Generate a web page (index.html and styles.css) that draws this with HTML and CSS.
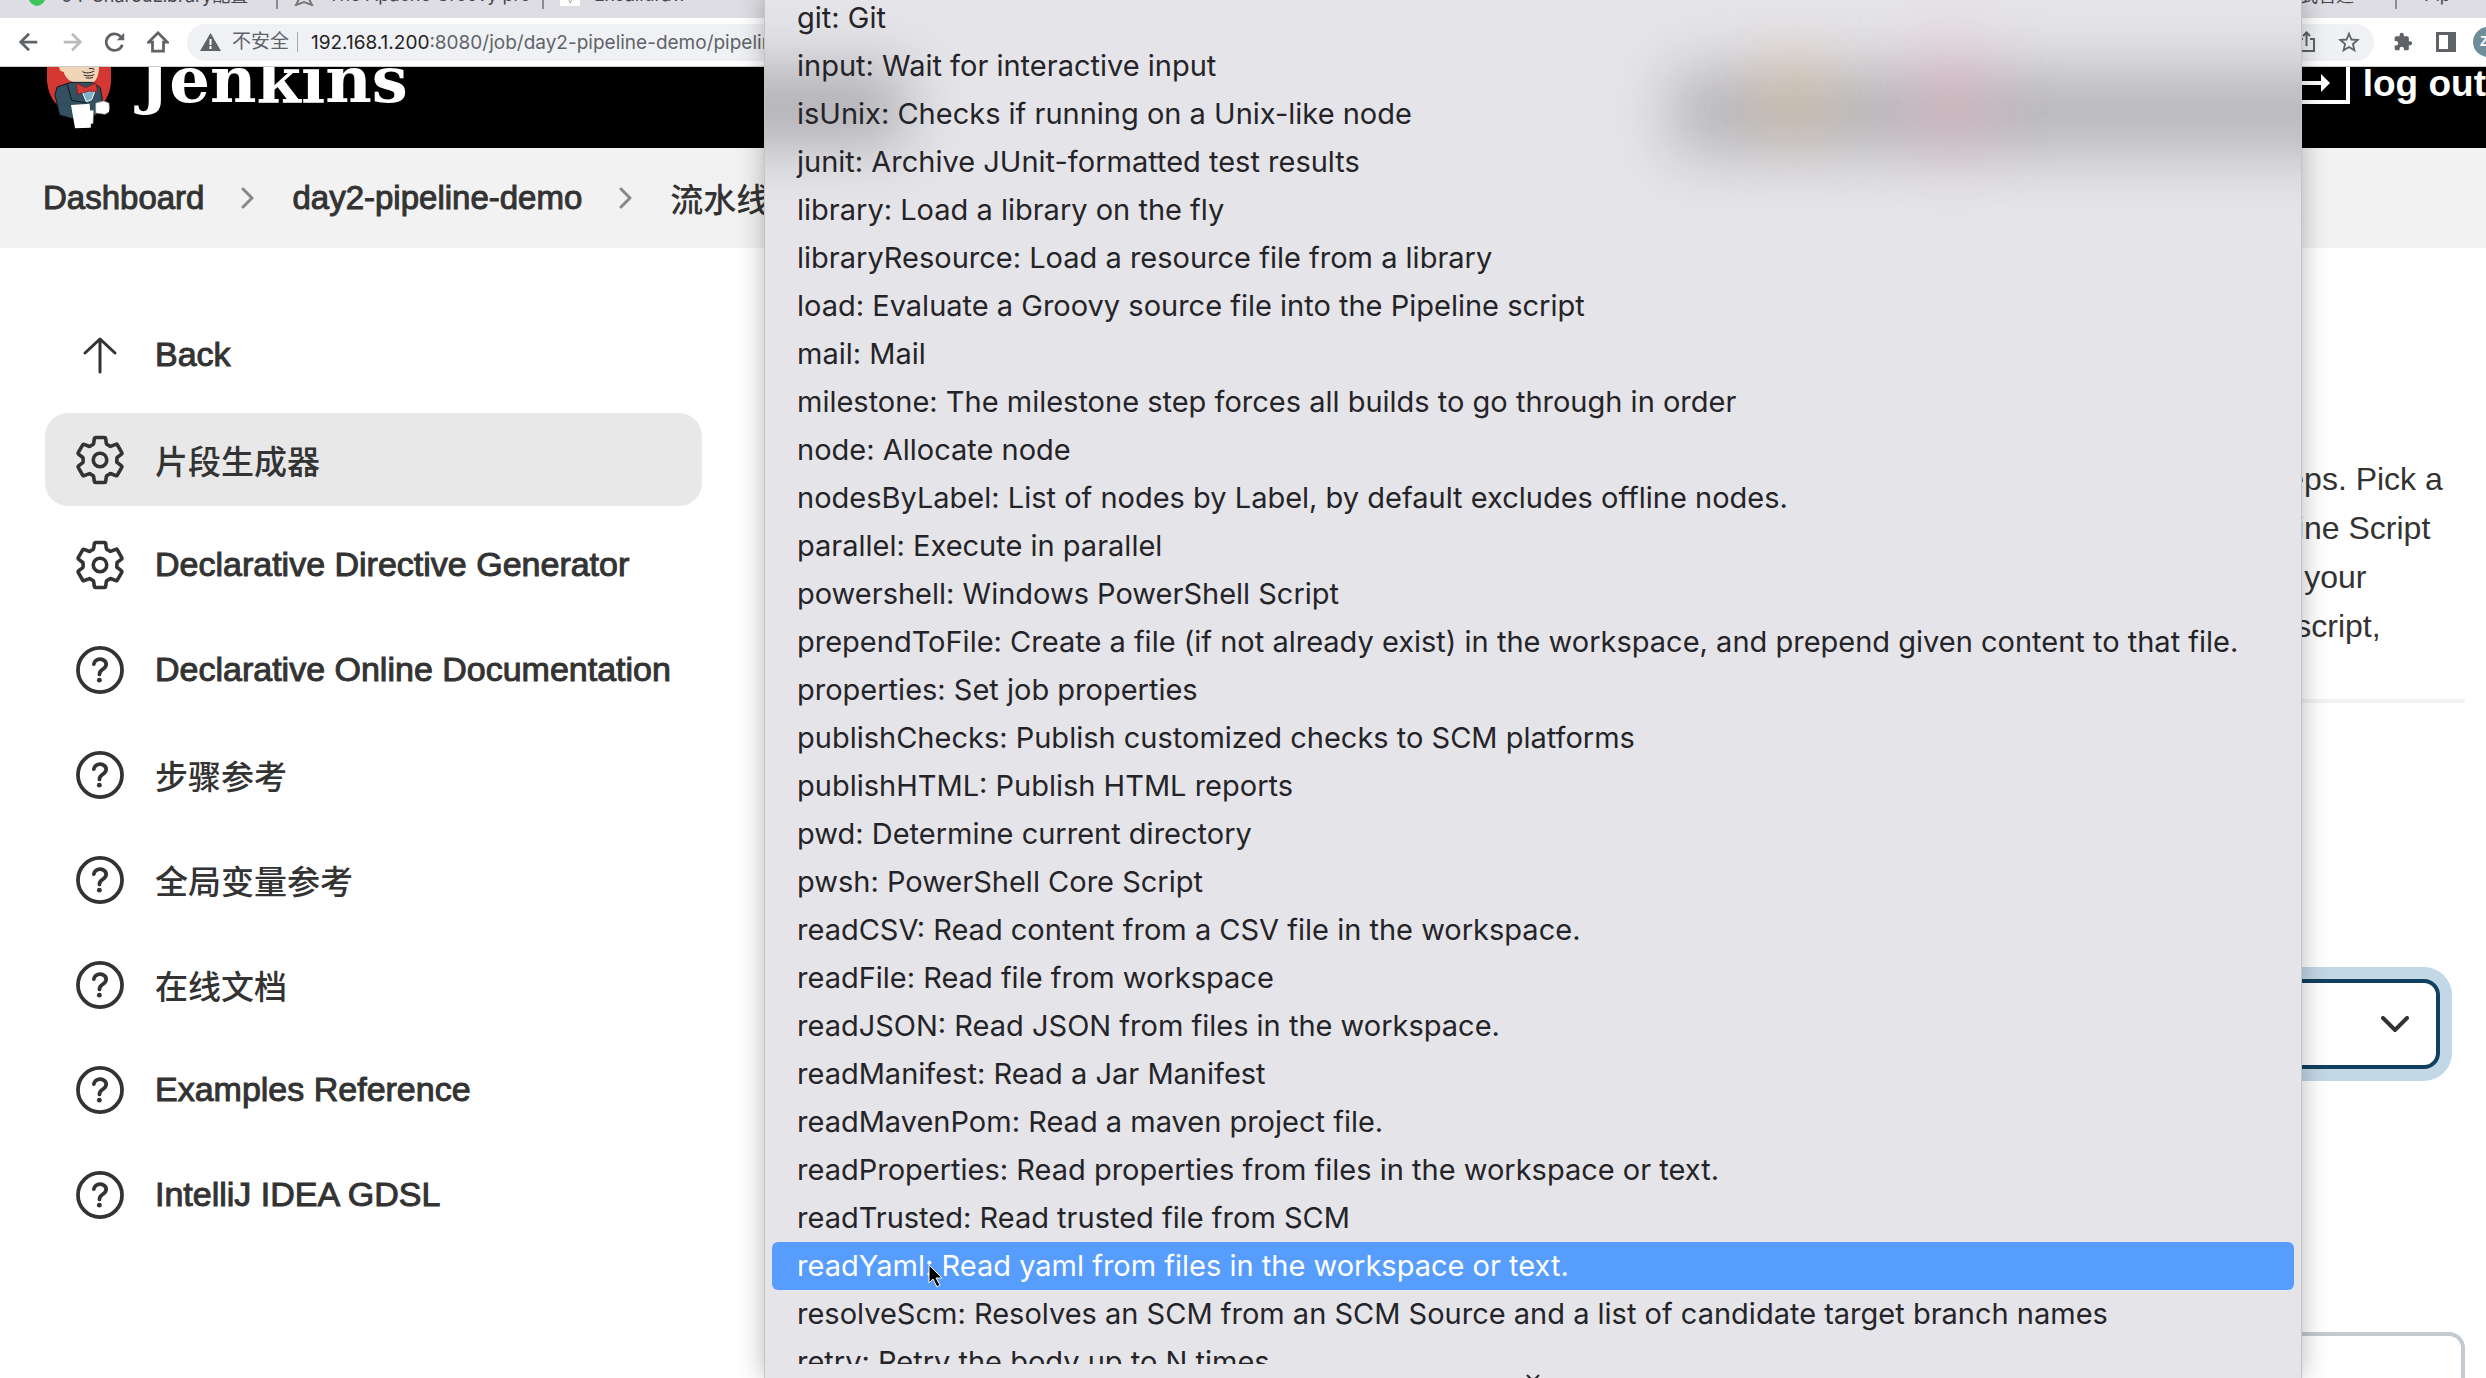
FILE: index.html
```html
<!DOCTYPE html>
<html lang="zh-CN">
  <head>
    <meta charset="UTF-8" />
    <title>Pipeline Syntax: Snippet Generator [Jenkins]</title>
    <link rel="stylesheet" href="styles.css">
  </head>

  <body>
    <svg class="defs" aria-hidden="true">
      <symbol id="icon-gear" viewBox="0 0 512 512">
        <path d="M262.29 192.31a64 64 0 1057.4 57.4 64.13 64.13 0 00-57.4-57.4zM416.39 256a154.34 154.34 0 01-1.53 20.79l45.21 35.46a10.81 10.81 0 012.45 13.75l-42.77 74a10.81 10.81 0 01-13.14 4.59l-44.9-18.08a16.11 16.11 0 00-15.17 1.75A164.48 164.48 0 01325 400.8a15.94 15.94 0 00-8.82 12.14l-6.73 47.89a11.08 11.08 0 01-10.68 9.17h-85.54a11.11 11.11 0 01-10.69-8.87l-6.72-47.82a16.07 16.07 0 00-9-12.22 155.3 155.3 0 01-21.46-12.57 16 16 0 00-15.11-1.71l-44.89 18.07a10.81 10.81 0 01-13.14-4.58l-42.77-74a10.8 10.8 0 012.45-13.75l38.21-30a16.05 16.05 0 006-14.08c-.36-4.17-.58-8.33-.58-12.5s.21-8.27.58-12.35a16 16 0 00-6.07-13.94l-38.19-30A10.81 10.81 0 0149.48 186l42.77-74a10.81 10.81 0 0113.14-4.59l44.9 18.08a16.11 16.11 0 0015.17-1.75A164.48 164.48 0 01187 111.2a15.94 15.94 0 008.82-12.14l6.73-47.89A11.08 11.08 0 01213.23 42h85.54a11.11 11.11 0 0110.69 8.87l6.72 47.82a16.07 16.07 0 009 12.22 155.3 155.3 0 0121.46 12.57 16 16 0 0015.11 1.71l44.89-18.07a10.81 10.81 0 0113.14 4.58l42.77 74a10.8 10.8 0 01-2.45 13.75l-38.21 30a16.05 16.05 0 00-6.05 14.08c.33 4.14.55 8.3.55 12.47z" fill="none" stroke="currentColor" stroke-width="34" stroke-linejoin="round" />
      </symbol>
      <symbol id="icon-help" viewBox="11 11 490 490">
        <circle cx="256" cy="256" r="200" fill="none" stroke="currentColor" stroke-width="34" />
        <path d="M200 202.29s.84-17.5 19.57-32.57C230.68 160.77 244 158.18 256 158c10.93-.14 20.69 1.67 26.53 4.45 10 4.76 29.47 16.38 29.47 41.09 0 26-17 37.81-36.37 50.8S251 281.43 251 296" fill="none" stroke="currentColor" stroke-width="34" stroke-linecap="round" />
        <circle cx="250" cy="348" r="22" fill="currentColor" />
      </symbol>
      <symbol id="icon-up" viewBox="0 0 54 54">
        <path d="M12 25L27 11l15 14M27 12v32" fill="none" stroke="currentColor" stroke-width="3" stroke-linecap="round" stroke-linejoin="round" />
      </symbol>
      <symbol id="icon-chevron" viewBox="0 0 14 22">
        <path d="M2 2l9 9-9 9" fill="none" stroke="currentColor" stroke-width="3" stroke-linecap="round" stroke-linejoin="round" />
      </symbol>
    </svg>

    <div class="tabs">
      <div class="tab">
        <svg class="favicon" viewBox="0 0 20 24"><path d="M10 0c8 4 10 9 9 15-1 5-4 8-9 9-5-1-8-4-9-9C0 9 2 4 10 0z" fill="#3cc45c" /></svg>
        <span class="tab-title">04-SharedLibrary配置</span>
        <span class="tab-close">✕</span>
      </div>
      <div class="tab">
        <svg class="favicon" viewBox="0 0 20 24"><path d="M10 3l3 8 7 1-5 5 3 6-8-3-8 3 3-6-5-5 7-1z" fill="none" stroke="#777" stroke-width="2" /></svg>
        <span class="tab-title">The Apache Groovy pro</span>
        <span class="tab-close">✕</span>
      </div>
      <div class="tab tab-wide">
        <svg class="favicon" viewBox="0 0 20 24"><path d="M0 0h20v24H0z" fill="#fff" /><path d="M7 12l3 9 4-7" fill="none" stroke="#aaa" /></svg>
        <span class="tab-title">Excalidraw</span>
      </div>
      <div class="tab tab-end">
        <span class="tab-title">声明式管道</span>
        <span class="tab-close">✕</span>
      </div>
      <div class="tab tab-last">
        <span class="tab-title">Pip</span>
      </div>
    </div>

    <div class="toolbar">
      <button class="tool" aria-label="Back"><svg viewBox="0 0 24 24"><path d="M21 12H4M12 3l-9 9 9 9" /></svg></button>
      <button class="tool tool-off" aria-label="Forward"><svg viewBox="0 0 24 24"><path d="M3 12h17M12 3l9 9-9 9" /></svg></button>
      <button class="tool" aria-label="Reload"><svg viewBox="0 0 24 24"><path d="M20 15a9 9 0 1 1-2-9l3 3" /><path d="M22 2v8h-8z" fill="currentColor" stroke="none" /></svg></button>
      <button class="tool" aria-label="Home"><svg viewBox="0 0 24 24"><path d="M2 12L12 2l10 10h-4v10H6V12z" /></svg></button>
      <div class="address">
        <svg class="warning" viewBox="0 0 21 18"><path d="M10.500 0L21 18H0z" fill="#5f6368" /><path d="M10.500 6v6M10.500 13v3" stroke="#fff" stroke-width="2" /></svg>
        <span class="insecure">不安全</span>
        <span class="url"><b>192.168.1.200</b>:8080/job/day2-pipeline-demo/pipeline-syntax/</span>
        <svg class="share" viewBox="0 0 20 22"><path d="M7 8H3v12h15V8h-4M10.500 15V2M7 5l3.500-3.500L14 5" /></svg>
        <svg class="star" viewBox="0 0 24 24"><path d="M12 3l2.600 6.300 6.900.5-5.200 4.500 1.600 6.700-5.900-3.600L6.100 21l1.600-6.700-5.200-4.500 6.900-.5z" /></svg>
      </div>
      <svg class="puzzle" viewBox="0 0 24 24"><path d="M20.500 11H19V7a2 2 0 0 0-2-2h-4V3.500a2.500 2.500 0 0 0-5 0V5H4a2 2 0 0 0-2 2v3.800h1.500a2.700 2.700 0 0 1 0 5.400H2V20a2 2 0 0 0 2 2h3.800v-1.500a2.700 2.700 0 0 1 5.400 0V22H17a2 2 0 0 0 2-2v-4h1.500a2.500 2.500 0 0 0 0-5z" /></svg>
      <svg class="panel" viewBox="0 0 20 20"><path d="M0 0h20v20H0zM3 3v14h9V3z" fill-rule="evenodd" /></svg>
      <span class="avatar">Z</span>
    </div>

    <header class="header">
      <a class="logo" href="#">
        <svg class="butler" viewBox="140 200 192 186">
          <path d="M140 200h192v40c0 40-22 80-60 100l-80-10c-32-18-50-50-52-90z" fill="#d33833" />
          <path d="M176 200c2 12 8 14 14 14 4 20 24 34 42 34h44c14-8 20-26 20-48z" fill="#f0d6b7" />
          <path d="M246 214c12 6 24 4 36-2M250 224c10 4 22 3 32-1M256 232c8 2 14 2 22-1M266 204l16 2" fill="none" stroke="#231f20" stroke-width="3" />
          <path d="M212 246l-42 14-6 24 14 60 36 10 74-10 18-46-6-36-24-16z" fill="#335061" stroke="#0f1a20" stroke-width="3" />
          <path d="M244 270l14 34 16-6 12-32z" fill="#81b0c4" stroke="#fff" stroke-width="3" />
          <path d="M200 250l14 50 44 8" fill="none" stroke="#0f1a20" stroke-width="3" />
          <path d="M228 248l28 14 30-14 6 26-26-2-34 10z" fill="#d33833" stroke="#7a1512" stroke-width="2" />
          <path d="M286 308l24-6 16 6 2 26-14 8-28-4zM258 330h22l-2 40h-20z" fill="#fff" stroke="#888" stroke-width="2" />
          <path d="M212 314l56-4 4 72-48 2z" fill="#fff" />
        </svg>
        <span class="logo-text">Jenkins</span>
      </a>
      <a class="logout" href="#">
        <svg class="logout-icon" viewBox="0 0 52 44"><path d="M2 14V2h48v40H2V32" /><path d="M0 23h26" /><path d="M23 14l9 9-9 9z" fill="#fff" stroke="none" /></svg>
        log out
      </a>
    </header>

    <nav class="breadcrumbs">
      <a href="#">Dashboard</a>
      <svg class="sep"><use href="#icon-chevron" /></svg>
      <a href="#">day2-pipeline-demo</a>
      <svg class="sep"><use href="#icon-chevron" /></svg>
      <a class="zh" href="#">流水线语法</a>
    </nav>

    <div class="page">
      <aside class="tasks">
        <a class="task" href="#"><svg><use href="#icon-up" /></svg>Back</a>
        <a class="task task-active zh" href="#"><svg><use href="#icon-gear" /></svg>片段生成器</a>
        <a class="task" href="#"><svg><use href="#icon-gear" /></svg>Declarative Directive Generator</a>
        <a class="task" href="#"><svg><use href="#icon-help" /></svg>Declarative Online Documentation</a>
        <a class="task zh" href="#"><svg><use href="#icon-help" /></svg>步骤参考</a>
        <a class="task zh" href="#"><svg><use href="#icon-help" /></svg>全局变量参考</a>
        <a class="task zh" href="#"><svg><use href="#icon-help" /></svg>在线文档</a>
        <a class="task" href="#"><svg><use href="#icon-help" /></svg>Examples Reference</a>
        <a class="task" href="#"><svg><use href="#icon-help" /></svg>IntelliJ IDEA GDSL</a>
      </aside>

      <main class="main">
        <p class="intro">
          This <strong>Snippet Generator</strong> will help you learn the Pipeline Script code which can be used to define various steps. Pick a
          step you are interested in from the list, configure it, click <strong>Generate Pipeline Script</strong>, and you will see a Pipeline Script
          statement that would call the step with that configuration. You may copy and paste the whole statement into your
          script, or pick up just the options you care about. (Most parameters are optional and can be omitted in your script,
          leaving them at default values.)
        </p>
        <hr class="rule" />
        <div class="step">
          <select class="step-select" aria-label="Sample Step">
            <option>readYaml: Read yaml from files in the workspace or text.</option>
          </select>
          <svg class="step-arrow" viewBox="0 0 28 16"><path d="M2 2l12 12L26 2" /></svg>
        </div>
        <textarea class="script" aria-label="Pipeline Script"></textarea>
      </main>
    </div>

    <div class="popup">
      <div class="glass">
        <i class="blob blob-left"></i>
        <i class="blob blob-right"></i>
        <i class="blob blob-orange"></i>
        <i class="blob blob-pink"></i>
      </div>
      <ul class="options" role="listbox" aria-label="Sample Step">
        <li role="option">git: Git</li>
        <li role="option">input: Wait for interactive input</li>
        <li role="option">isUnix: Checks if running on a Unix-like node</li>
        <li role="option">junit: Archive JUnit-formatted test results</li>
        <li role="option">library: Load a library on the fly</li>
        <li role="option">libraryResource: Load a resource file from a library</li>
        <li role="option">load: Evaluate a Groovy source file into the Pipeline script</li>
        <li role="option">mail: Mail</li>
        <li role="option">milestone: The milestone step forces all builds to go through in order</li>
        <li role="option">node: Allocate node</li>
        <li role="option">nodesByLabel: List of nodes by Label, by default excludes offline nodes.</li>
        <li role="option">parallel: Execute in parallel</li>
        <li role="option">powershell: Windows PowerShell Script</li>
        <li role="option">prependToFile: Create a file (if not already exist) in the workspace, and prepend given content to that file.</li>
        <li role="option">properties: Set job properties</li>
        <li role="option">publishChecks: Publish customized checks to SCM platforms</li>
        <li role="option">publishHTML: Publish HTML reports</li>
        <li role="option">pwd: Determine current directory</li>
        <li role="option">pwsh: PowerShell Core Script</li>
        <li role="option">readCSV: Read content from a CSV file in the workspace.</li>
        <li role="option">readFile: Read file from workspace</li>
        <li role="option">readJSON: Read JSON from files in the workspace.</li>
        <li role="option">readManifest: Read a Jar Manifest</li>
        <li role="option">readMavenPom: Read a maven project file.</li>
        <li role="option">readProperties: Read properties from files in the workspace or text.</li>
        <li role="option">readTrusted: Read trusted file from SCM</li>
        <li role="option" class="active" aria-selected="true">
          readYaml: Read yaml from files in the workspace or text.
          <svg class="cursor" viewBox="0 0 16 24"><path d="M1 1v18l4-4 4 8 3-2-4-7h6z" fill="#000" stroke="#fff" /></svg>
        </li>
        <li role="option">resolveScm: Resolves an SCM from an SCM Source and a list of candidate target branch names</li>
        <li role="option">retry: Retry the body up to N times</li>
      </ul>
      <div class="more"><svg viewBox="0 0 14 8"><path d="M1 1l6 6 6-6" /></svg></div>
    </div>
  </body>
</html>
```

FILE: styles.css
```css
*,
*:before,
*:after {
  box-sizing: border-box;
}

body {
  position: relative;
  display: flex;
  flex-direction: column;
  height: 100vh;
  margin: 0;
  overflow: hidden;
  background-color: #fff;
  color: #333;
  font-family: "Liberation Sans", "Noto Sans CJK SC", sans-serif;
  font-size: 32px;
}

a {
  color: inherit;
  text-decoration: none;
}

svg {
  flex: none;
}

.defs {
  display: none;
}

/* Browser chrome */
.tabs {
  display: flex;
  align-items: flex-end;
  flex: none;
  height: 18px;
  overflow: hidden;
  background-color: #dddde3;
  color: #45474a;
  font-family: Inter, "Noto Sans CJK SC", sans-serif;
  font-size: 18px;
}

.tab {
  display: flex;
  align-items: center;
  flex: none;
  gap: 14px;
  width: 266px;
  height: 48px;
  padding: 18px 12px 0 16px;
  margin-bottom: 9px;
  border-right: 2px solid #8c8c92;
  white-space: nowrap;
}

.tab:first-child {
  width: 278px;
  padding-left: 27px;
}

.tab-wide {
  flex: 1;
  border: none;
}

.tab-end {
  width: auto;
}

.tab-last {
  width: 89px;
  padding-left: 27px;
  border: none;
}

.tab-title {
  flex: 1;
}

.favicon {
  width: 20px;
  height: 24px;
}

.toolbar {
  display: flex;
  align-items: center;
  flex: none;
  height: 49px;
  padding-left: 15px;
  background-color: #fff;
  border-bottom: 1px solid #ccc;
  color: #5f6368;
}

.tool {
  display: flex;
  justify-content: center;
  width: 28px;
  margin-right: 15px;
  padding: 0;
  border: none;
  background: none;
  color: inherit;
  cursor: pointer;
}

.tool svg {
  width: 22px;
  height: 22px;
  fill: none;
  stroke: currentColor;
  stroke-width: 3;
}

.tool-off {
  color: #bbb;
}

.address {
  display: flex;
  align-items: center;
  flex: 1;
  min-width: 0;
  height: 37px;
  padding: 0 14px 0 13px;
  border-radius: 19px;
  background-color: #f0f1f5;
  font-family: Inter, "Noto Sans CJK SC", sans-serif;
  font-size: 19px;
}

.warning {
  width: 21px;
  height: 18px;
  margin-right: 11px;
}

.insecure {
  padding-right: 8px;
  margin-right: 13px;
  border-right: 1px solid #aaa;
  line-height: 20px;
}

.url {
  flex: 1;
}

.url b {
  color: #222;
  font-weight: 400;
}

.share,
.star {
  width: 22px;
  height: 22px;
  fill: none;
  stroke: currentColor;
  stroke-width: 2;
}

.share {
  margin-right: 21px;
}

.puzzle,
.panel {
  width: 20px;
  height: 20px;
  margin-left: 19px;
  fill: currentColor;
}

.panel {
  margin-left: 23px;
}

.avatar {
  flex: none;
  width: 30px;
  height: 30px;
  margin-left: 17px;
  margin-right: -17px;
  border-radius: 50%;
  background-color: #6f8c99;
  color: #fff;
  font-size: 14px;
  font-weight: bold;
  line-height: 28px;
  text-indent: 7px;
}

/* Jenkins header, scrolled a little under the toolbar */
.header {
  display: flex;
  justify-content: space-between;
  flex: none;
  height: 81px;
  overflow: hidden;
  background-color: #000;
  color: #fff;
  padding-left: 47px;
}

.logo {
  display: flex;
  align-items: flex-start;
  gap: 28px;
}

.butler {
  width: 64px;
  height: 62px;
  border-radius: 0 0 28px 28px;
}

.logo-text {
  margin-top: -32px;
  font-family: "DejaVu Serif", serif;
  font-size: 64px;
  font-weight: bold;
  line-height: 90px;
}

.logout {
  display: flex;
  align-items: flex-start;
  gap: 13px;
  font-size: 37px;
  font-weight: bold;
  line-height: 34px;
  white-space: nowrap;
}

.logout-icon {
  width: 52px;
  height: 44px;
  margin-top: -7px;
  fill: none;
  stroke: #fff;
  stroke-width: 4;
}

.breadcrumbs {
  display: flex;
  align-items: center;
  flex: none;
  gap: 37px;
  height: 100px;
  padding-left: 43px;
  background-color: #f2f2f2;
  font-size: 33px;
  -webkit-text-stroke: 1px;
  white-space: nowrap;
}

.sep {
  width: 14px;
  height: 22px;
  color: #888;
}

.page {
  display: flex;
  align-items: flex-start;
  flex: 1;
  min-height: 0;
}

/* Side panel */
.tasks {
  display: flex;
  flex-direction: column;
  flex: none;
  gap: 12px;
  width: 766px;
  padding: 60px 64px 0 45px;
}

.task {
  display: flex;
  align-items: center;
  gap: 28px;
  height: 93px;
  padding-left: 28px;
  border-radius: 23px;
  font-size: 34px;
  -webkit-text-stroke: 1px;
  white-space: nowrap;
}

.task svg {
  width: 54px;
  height: 54px;
}

.zh {
  font-size: 33px;
  font-weight: 500;
  -webkit-text-stroke: 0;
}

.task-active {
  background-color: #e8e8e8;
}

/* Snippet generator form */
.main {
  flex: 1;
  min-width: 0;
  padding: 207px 21px 0 0;
}

.intro {
  height: 244px;
  margin: 0;
  padding: 0 12px;
  line-height: 49px;
}

.rule {
  height: 4px;
  margin: 0;
  border: none;
  background-color: #f2f2f2;
}

.step {
  position: relative;
  margin: 276px 25px 263px 12px;
}

.step-select {
  display: block;
  width: 100%;
  height: 90px;
  padding: 0 80px 0 24px;
  appearance: none;
  border: 4px solid #10405f;
  border-radius: 16px;
  box-shadow: 0 0 0 12px #c3d8e6;
  background-color: #fff;
  color: #333;
  font: inherit;
}

.step-arrow {
  position: absolute;
  top: 37px;
  right: 31px;
  width: 28px;
  height: 16px;
  fill: none;
  stroke: #333;
  stroke-width: 4;
  stroke-linecap: round;
}

.script {
  display: block;
  width: 100%;
  height: 200px;
  border: 4px solid #c3cbd1;
  border-radius: 16px;
  resize: none;
}

/* Open option list */
.popup {
  position: absolute;
  top: -6px;
  right: 185px;
  bottom: 0;
  left: 765px;
  display: flex;
  flex-direction: column;
  background-color: #e5e4e9;
  box-shadow: 0 0 0 1px #c4c4c8, 0 0 26px rgba(0, 0, 0, 0.3);
  color: #242428;
  font-family: Inter, sans-serif;
  font-size: 29px;
}

.glass {
  position: absolute;
  inset: 0;
  overflow: hidden;
}

.blob {
  position: absolute;
  filter: blur(30px);
}

.blob-left {
  top: 76px;
  left: -60px;
  width: 200px;
  height: 74px;
  background-color: rgba(0, 0, 0, 0.24);
}

.blob-right {
  top: 76px;
  right: -80px;
  width: 710px;
  height: 84px;
  background-color: rgba(0, 0, 0, 0.2);
}

.blob-orange {
  top: 60px;
  right: 470px;
  width: 70px;
  height: 80px;
  background-color: rgba(235, 190, 130, 0.35);
}

.blob-pink {
  top: 50px;
  right: 310px;
  width: 80px;
  height: 100px;
  background-color: rgba(240, 170, 190, 0.35);
}

.options {
  position: relative;
  flex: 1;
  min-height: 0;
  margin: 0;
  padding: 0 7px;
  overflow: hidden;
  list-style: none;
}

.options li {
  position: relative;
  height: 48px;
  padding-left: 25px;
  border-radius: 6px;
  line-height: 48px;
  white-space: nowrap;
  cursor: default;
}

.options .active {
  background-color: #569dfe;
  color: #fff;
}

.cursor {
  position: absolute;
  top: 22px;
  left: 156px;
  width: 16px;
  height: 24px;
}

.more {
  display: flex;
  justify-content: center;
  align-items: flex-end;
  flex: none;
  height: 14px;
  overflow: hidden;
}

.more svg {
  width: 14px;
  height: 8px;
  margin-bottom: -4px;
  fill: none;
  stroke: #242428;
  stroke-width: 2;
}
```
